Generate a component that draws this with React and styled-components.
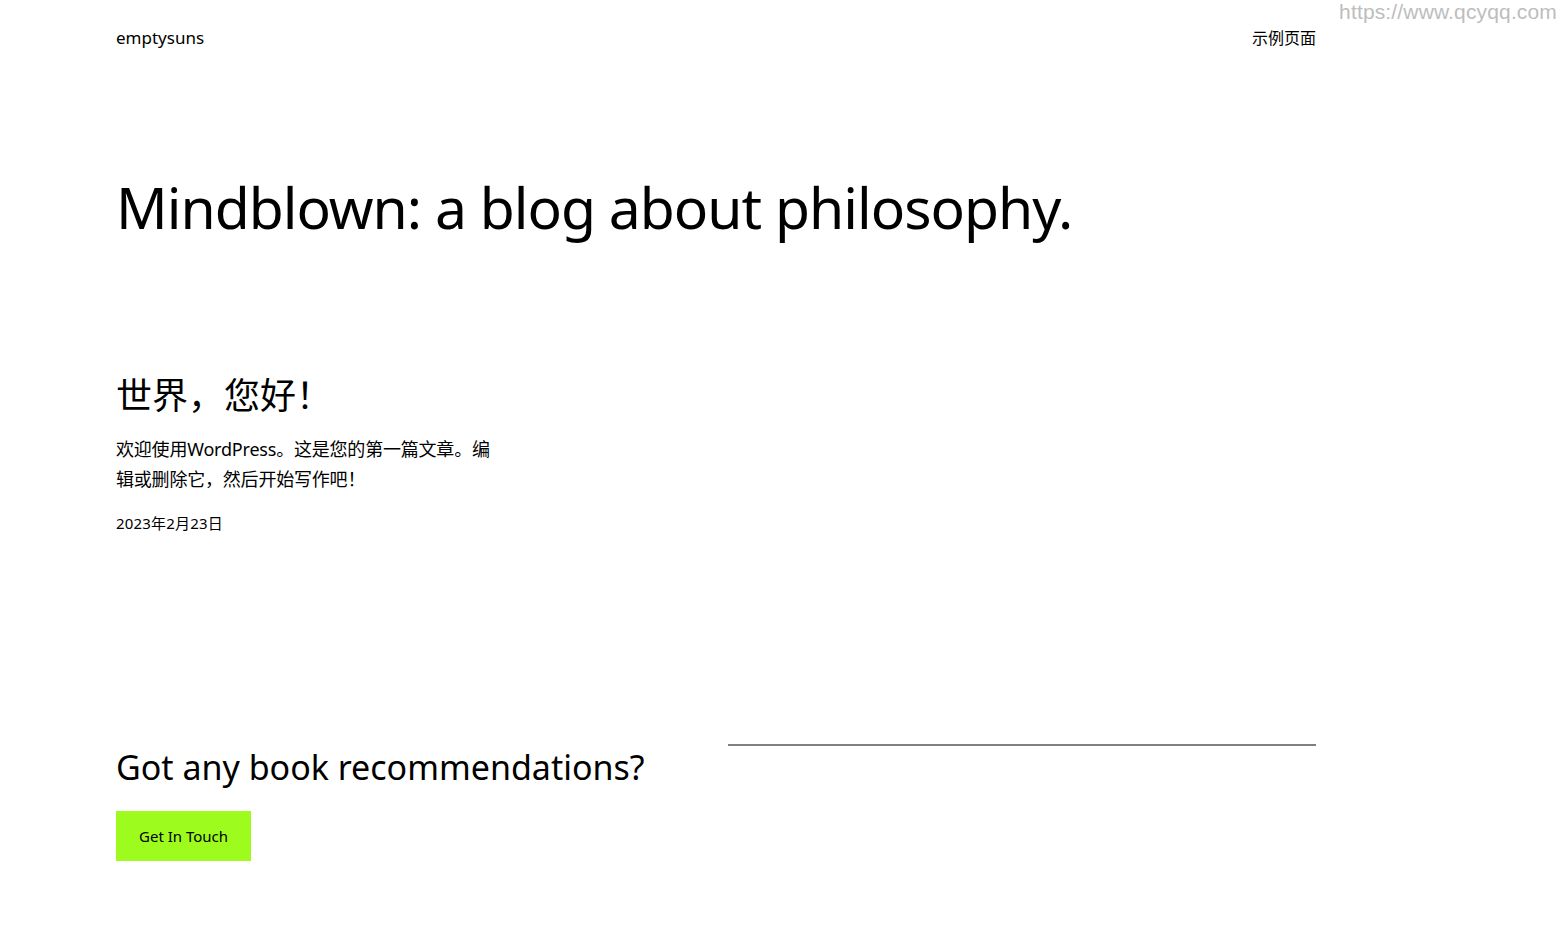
import styled, { createGlobalStyle } from "styled-components";

const GlobalStyle = createGlobalStyle`
  html, body {
    margin: 0;
    padding: 0;
    background: #fff;
  }
  body {
    font-family: "Noto Sans", "Noto Sans CJK SC", sans-serif;
    color: #000;
  }
`;

const Page = styled.div`
  position: relative;
  min-height: 936px;
  display: flex;
  flex-direction: column;
`;

const Watermark = styled.div`
  position: absolute;
  top: 0;
  right: 10px;
  font-family: "Liberation Sans", Arial, sans-serif;
  font-size: 21px;
  letter-spacing: 0.15px;
  line-height: 24px;
  color: #bdbdbd;
`;

const Container = styled.div`
  width: 1200px;
  margin-left: 116px;
`;

const Header = styled(Container)`
  display: flex;
  justify-content: space-between;
  align-items: center;
  padding-top: 25px;
`;

const SiteTitle = styled.a`
  font-size: 17px;
  color: #000;
  text-decoration: none;
`;

const NavLink = styled.a`
  font-size: 16px;
  color: #000;
  text-decoration: none;
`;

const Hero = styled.h1`
  font-weight: 400;
  font-size: 57px;
  letter-spacing: -1px;
  line-height: 1.2;
  margin: 124px 0 0;
`;

const Post = styled.article`
  margin-top: 133px;
`;

const PostTitle = styled.h2`
  font-weight: 400;
  font-size: 36px;
  line-height: 1.2;
  margin: 0 0 16px;
`;

const Excerpt = styled.p`
  width: 380px;
  font-size: 18px;
  letter-spacing: -0.2px;
  line-height: 30px;
  margin: 0 0 18px;
`;

const PostDate = styled.time`
  display: block;
  font-size: 15px;
  letter-spacing: 0.2px;
`;

const Footer = styled(Container)`
  display: grid;
  grid-template-columns: 1fr 1fr;
  gap: 24px;
  margin-top: 211px;
`;

const Cta = styled.div`
  display: flex;
  flex-direction: column;
  align-items: flex-start;
  gap: 23px;
`;

const CtaTitle = styled.h2`
  font-weight: 400;
  font-size: 34px;
  line-height: 41px;
  margin: 3px 0 0;
`;

const Button = styled.a`
  display: inline-flex;
  align-items: center;
  height: 50px;
  box-sizing: border-box;
  background: #9dfc1d;
  color: #000;
  font-size: 15px;
  padding: 0 23px;
  text-decoration: none;
`;

const Separator = styled.hr`
  border: none;
  border-top: 2px solid #808080;
  margin: 0;
  align-self: start;
`;

export default function App() {
  return (
    <Page>
      <GlobalStyle />
      <Watermark>https://www.qcyqq.com</Watermark>
      <Header as="header">
        <SiteTitle href="#">emptysuns</SiteTitle>
        <NavLink href="#">示例页面</NavLink>
      </Header>
      <Container as="main">
        <Hero>Mindblown: a blog about philosophy.</Hero>
        <Post>
          <PostTitle>世界，您好！</PostTitle>
          <Excerpt>欢迎使用WordPress。这是您的第一篇文章。编辑或删除它，然后开始写作吧！</Excerpt>
          <PostDate>2023年2月23日</PostDate>
        </Post>
      </Container>
      <Footer as="footer">
        <Cta>
          <CtaTitle>Got any book recommendations?</CtaTitle>
          <Button href="#">Get In Touch</Button>
        </Cta>
        <Separator />
      </Footer>
    </Page>
  );
}
